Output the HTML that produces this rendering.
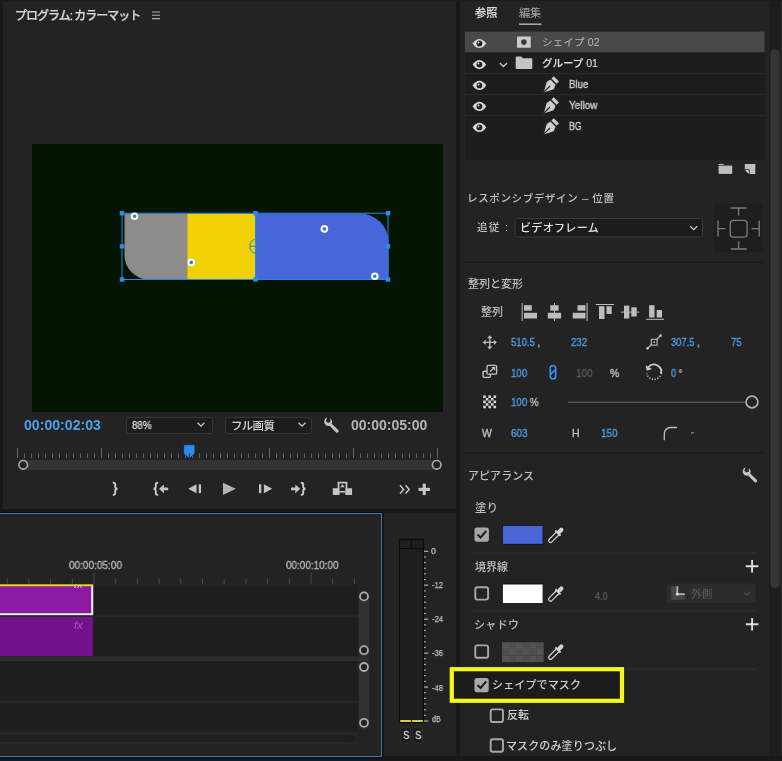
<!DOCTYPE html>
<html lang="ja">
<head>
<meta charset="utf-8">
<title>プログラム: カラーマット</title>
<style>
html,body{margin:0;padding:0;background:#181818;}
body{width:782px;height:761px;overflow:hidden;position:relative;font-family:"Liberation Sans","Noto Sans CJK JP",sans-serif;color:#bdbdbd;font-size:12px;-webkit-font-smoothing:antialiased;}
.abs{position:absolute;}
.panel{position:absolute;background:#232323;}
.t{will-change:transform;position:absolute;white-space:nowrap;line-height:1;}
.blue{color:#4a9ee6;}
.line{position:absolute;height:1px;background:#323232;}
svg{position:absolute;overflow:visible;}
.cb{position:absolute;width:11px;height:11px;border:1.5px solid #a8a8a8;border-radius:2px;}
.cbc{position:absolute;width:14px;height:14px;background:#b0b0b0;border-radius:2px;}
.mt{font-size:8.5px;color:#b8b8b8;}
.ly{font-size:11.500px;color:#c8c8c8;}
.v{font-size:10.500px;}
.g{color:#c0c0c0;}
</style>
</head>
<body>
<!-- ===== Program monitor panel ===== -->
<div class="panel" id="pm" style="left:2.5px;top:0;width:453.7px;height:508.8px;"></div>
<svg style="left:151.5px;top:11px;" width="9" height="9"><path d="M0 1h8M0 4.300h8M0 7.600h8" stroke="#b0b0b0" stroke-width="1.100"/></svg>
<!-- video -->
<div class="abs" style="left:32px;top:144px;width:411px;height:268px;background:#051503;"></div>
<svg style="left:0;top:0;" width="460" height="420" id="shapes">
  <path d="M124.500 213.500H190V279.500H149A24.500 24.500 0 0 1 124.500 255Z" fill="#8c8c8c"/>
  <rect x="187.5" y="213.5" width="68" height="66" fill="#f0d106"/>
  <path d="M255.5 213.5H360A28.5 28.5 0 0 1 388.5 242V279.5H255.5Z" fill="#4766da"/>
  <rect x="122" y="213.2" width="266" height="66.3" fill="none" stroke="#2a86e0" stroke-width="1"/>
  <line x1="255.5" y1="213" x2="255.5" y2="280" stroke="#2a86e0" stroke-width="1"/>
  <g fill="#2a8cee">
    <rect x="119.8" y="211" width="4.4" height="4.4"/><rect x="253.3" y="211" width="4.4" height="4.4"/><rect x="385.8" y="211" width="4.4" height="4.4"/>
    <rect x="119.8" y="244.1" width="4.4" height="4.4"/><rect x="385.8" y="244.1" width="4.4" height="4.4"/>
    <rect x="119.8" y="277.3" width="4.4" height="4.4"/><rect x="253.3" y="277.3" width="4.4" height="4.4"/><rect x="385.8" y="277.3" width="4.4" height="4.4"/>
  </g>
  <g fill="#2a7fd8" stroke="#fff" stroke-width="2">
    <circle cx="134.5" cy="216.3" r="2.800"/><circle cx="191.3" cy="262.4" r="2.800"/><circle cx="324.4" cy="228.9" r="2.800"/><circle cx="374.8" cy="276.2" r="2.800"/>
  </g>
  <g fill="none" stroke="#2a7fd8" stroke-width="1"><circle cx="257.3" cy="246.3" r="7.5"/><path d="M250 246.3h15M257.3 239v15"/></g>
</svg>
<!-- timecode row -->
<div class="abs" style="left:126px;top:417px;width:85px;height:15px;border:1px solid #373737;border-radius:2.5px;background:#1d1d1d;"></div>
<svg style="left:197px;top:422px;" width="8" height="6"><path d="M0.5 0.8L4 4.2L7.5 0.8" fill="none" stroke="#cfcfcf" stroke-width="1.2"/></svg>
<div class="abs" style="left:225px;top:417px;width:85px;height:15px;border:1px solid #373737;border-radius:2.5px;background:#1d1d1d;"></div>
<svg style="left:298px;top:422px;" width="8" height="6"><path d="M0.5 0.8L4 4.2L7.5 0.8" fill="none" stroke="#cfcfcf" stroke-width="1.2"/></svg>

<!-- ruler -->
<svg style="left:0;top:0;" width="460" height="510">
  <path d="M17.5 448V458M24.5 453.5V458M31.5 453.5V458M38.5 453.5V458M45.5 453.5V458M52.5 453.5V458M59.5 453.5V458M66.5 453.5V458M73.5 453.5V458M80.5 453.5V458M87.5 453.5V458M94.5 453.5V458M101.5 448V458M108.5 453.5V458M115.5 453.5V458M122.5 453.5V458M129.5 453.5V458M136.5 453.5V458M143.5 453.5V458M150.5 453.5V458M157.5 453.5V458M164.5 453.5V458M171.5 453.5V458M178.5 453.5V458M185.5 448V458M192.5 453.5V458M199.5 453.5V458M206.5 453.5V458M213.5 453.5V458M220.5 453.5V458M227.5 453.5V458M234.5 453.5V458M241.5 453.5V458M248.5 453.5V458M255.5 453.5V458M262.5 453.5V458M269.5 448V458M276.5 453.5V458M283.5 453.5V458M290.5 453.5V458M297.5 453.5V458M304.5 453.5V458M311.5 453.5V458M318.5 453.5V458M325.5 453.5V458M332.5 453.5V458M339.5 453.5V458M346.5 453.5V458M353.5 448V458M360.5 453.5V458M367.5 453.5V458M374.5 453.5V458M381.5 453.5V458M388.5 453.5V458M395.5 453.5V458M402.5 453.5V458M409.5 453.5V458M416.5 453.5V458M423.5 453.5V458M430.5 453.5V458M437.5 448V458" stroke="#646464" stroke-width="1" fill="none"/>
  <rect x="18" y="460" width="424" height="10" rx="5" fill="#333333"/>
  <circle cx="23.2" cy="464.8" r="4.3" fill="#232323" stroke="#a8a8a8" stroke-width="1.6"/>
  <circle cx="436.7" cy="464.8" r="4.3" fill="#232323" stroke="#a8a8a8" stroke-width="1.6"/>
  <path d="M183.700 444.800h11.200v8.600l-5.600 5.200l-5.600-5.200z" fill="#2d8ceb" stroke="#0c1c30" stroke-width=".6"/><path d="M189.300 453.500v4.500" stroke="#0a2a5a" stroke-width="1"/>
  <!-- transport -->
  <g fill="none" stroke="#cbcbcb" stroke-width="1.900">
    <path d="M112.800 482.700h.6q1.800 0 1.800 1.800v2.200q0 1.700 2.100 2.100q-2.100 .4-2.100 2.100v2.200q0 1.800-1.800 1.800h-.6"/>
    <path d="M158.200 482.700h-.6q-1.800 0-1.800 1.800v2.200q0 1.700-2.100 2.100q2.100 .4 2.100 2.100v2.200q0 1.800 1.800 1.800h.6"/>
    <path d="M300.800 482.700h.6q1.800 0 1.800 1.800v2.200q0 1.700 2.100 2.100q-2.100 .4-2.100 2.100v2.200q0 1.800-1.800 1.800h-.6"/>
  </g>
  <g fill="#c4c4c4">
    <path d="M159 488.800l4.900-4.400v3h4.300v2.800h-4.300v3z"/>
    <path d="M300.200 488.800l-4.900-4.400v3h-4.300v2.800h4.300v3z"/>
    <path d="M188.200 488.700l8.300-4.500v9z"/><rect x="198.700" y="484.300" width="2.300" height="8.800"/>
    <path d="M223 482.700l12.800 6.100l-12.800 6.100z" fill="#b4b4b4"/>
    <rect x="259" y="484.300" width="2.300" height="8.800"/><path d="M272.200 488.700l-8.300-4.500v9z"/>
    <path d="M332.800 488.300h6.800v6.600h-6.800zM345.300 488.300h6.800v6.600h-6.800zM337.600 481.700h9.800v8h-1.800v-6.200h-6.200v6.200h-1.800z"/>
    <path d="M342.500 484.300l2.400 3h-4.800z"/>
    <rect x="339.600" y="491" width="5.700" height="1.600"/>
    <rect x="418.500" y="487.800" width="11.500" height="3.200"/><rect x="422.650" y="483.600" width="3.200" height="11.500"/>
  </g>
  <path d="M400 485.200l3.700 4.200l-3.700 4.200M405.500 485.200l3.700 4.200l-3.700 4.200" fill="none" stroke="#c4c4c4" stroke-width="1.5"/>
  <!-- wrench -->
  <g transform="translate(324,417)"><path d="M3.200 .6a4.300 4.300 0 0 0-1.300 7.600a4.300 4.300 0 0 0 3.700 .5l6.300 6.500a1.500 1.500 0 0 0 2.300-2.100l-6.500-6.400a4.300 4.300 0 0 0-1.500-5.200l.3 3.200l-2.500 1.200l-2.200-1.900z" fill="#c4c4c4"/></g>
</svg>

<!-- ===== Timeline panel ===== -->
<div class="abs" style="left:-2px;top:513px;width:382px;height:242px;border:1px solid #3f78c0;background:#232323;box-shadow:0 0 0 1px #0c0c0c;"></div>
<div class="abs" style="left:0;top:585px;width:358px;height:148px;background:#1f1f1f;"></div>
<svg style="left:0;top:0;" width="460" height="761">
  <path d="M7.20 579V584M28.90 579V584M50.60 579V584M72.30 579V584M94.00 573V584M115.70 579V584M137.40 579V584M159.10 579V584M180.80 579V584M202.50 579V584M224.20 579V584M245.90 579V584M267.60 579V584M289.30 579V584M311.00 573V584M332.70 579V584M354.40 579V584" stroke="#4c4c4c" stroke-width="1" fill="none"/>
  <!-- clips -->
  <rect x="0" y="585" width="93.200" height="30.300" fill="#8c1aa0"/>
  <path d="M0 614.200H92.200V586" fill="none" stroke="#efefef" stroke-width="2"/>
  <rect x="0" y="584.300" width="93.200" height="1.900" fill="#ecdc10"/>
  <rect x="0" y="616.700" width="92.900" height="39.500" fill="#73128a"/>
  <rect x="0" y="615.500" width="358" height="1.200" fill="#2c2c2c"/>
  <rect x="0" y="656.500" width="369" height="4.500" fill="#2e2e2e"/>
  <rect x="0" y="701.200" width="358" height="1.200" fill="#2c2c2c"/>
  <rect x="0" y="732.500" width="358" height="1.200" fill="#2c2c2c"/>
  <rect x="0" y="742.500" width="358" height="1" fill="#2c2c2c"/>
  <rect x="-10" y="734" width="366" height="8.500" rx="4.200" fill="#1f1f1f" stroke="#2a2a2a" stroke-width="1"/>
  <!-- vertical scrollbars -->
  <rect x="358.700" y="591" width="10.500" height="66" rx="5" fill="#303030"/>
  <rect x="358.700" y="661" width="10.500" height="68" rx="5" fill="#303030"/>
  <g fill="#232323" stroke="#acacac" stroke-width="1.800">
    <circle cx="364" cy="596.400" r="4"/><circle cx="364" cy="650.200" r="4"/><circle cx="364" cy="667" r="4"/><circle cx="364" cy="722.800" r="4"/>
  </g>
</svg>
<div class="fx" style="will-change:transform;position:absolute;left:73.900px;top:619.5px;font-size:11.5px;line-height:1;font-style:italic;color:#a558bd;letter-spacing:-.3px;">fx</div>
<div class="fx" style="will-change:transform;position:absolute;left:73.900px;top:579px;font-size:11.5px;line-height:1;font-style:italic;color:#dcc0e4;letter-spacing:-.3px;clip-path:inset(6.5px 0 0 0);">fx</div>
<!-- ===== Audio meter panel ===== -->
<div class="panel" style="left:384px;top:513px;width:72px;height:243px;"></div>
<svg style="left:0;top:0;" width="460" height="761">
  <rect x="399.500" y="539.500" width="24" height="183" fill="#1e1e1e" stroke="#0a0a0a" stroke-width="1.200"/>
  <path d="M399.500 548.500h24M411.500 539.500v9" stroke="#0a0a0a" stroke-width="1.200"/>
  <rect x="400.200" y="720" width="10.700" height="2" fill="#d6cc3e"/><rect x="412.100" y="720" width="10.700" height="2" fill="#d6cc3e"/>
  <g fill="#b0b0b0"><rect x="424" y="550.7" width="4.200" height="1.200"/><rect x="424" y="556.4" width="1.800" height="1.200"/><rect x="424" y="562.0" width="1.800" height="1.200"/><rect x="424" y="567.7" width="1.800" height="1.200"/><rect x="424" y="573.3" width="1.800" height="1.200"/><rect x="424" y="579.0" width="1.800" height="1.200"/><rect x="424" y="584.6" width="4.200" height="1.200"/><rect x="424" y="590.3" width="1.800" height="1.200"/><rect x="424" y="596.0" width="1.800" height="1.200"/><rect x="424" y="601.6" width="1.800" height="1.200"/><rect x="424" y="607.3" width="1.800" height="1.200"/><rect x="424" y="612.9" width="1.800" height="1.200"/><rect x="424" y="618.6" width="4.200" height="1.200"/><rect x="424" y="624.2" width="1.800" height="1.200"/><rect x="424" y="629.9" width="1.800" height="1.200"/><rect x="424" y="635.5" width="1.800" height="1.200"/><rect x="424" y="641.2" width="1.800" height="1.200"/><rect x="424" y="646.9" width="1.800" height="1.200"/><rect x="424" y="652.5" width="4.200" height="1.200"/><rect x="424" y="658.2" width="1.800" height="1.200"/><rect x="424" y="663.8" width="1.800" height="1.200"/><rect x="424" y="669.5" width="1.800" height="1.200"/><rect x="424" y="675.1" width="1.800" height="1.200"/><rect x="424" y="680.8" width="1.800" height="1.200"/><rect x="424" y="686.5" width="4.200" height="1.200"/><rect x="424" y="692.1" width="1.800" height="1.200"/><rect x="424" y="697.8" width="1.800" height="1.200"/><rect x="424" y="703.4" width="1.800" height="1.200"/><rect x="424" y="709.1" width="1.800" height="1.200"/><rect x="424" y="714.7" width="1.800" height="1.200"/><rect x="424" y="720.4" width="4.200" height="1.200"/></g>
  <rect x="400.700" y="727.400" width="9.600" height="15.600" rx="1" fill="#1c1c1c" stroke="#303030" stroke-width=".8"/>
  <rect x="412.700" y="727.400" width="9.800" height="15.600" rx="1" fill="#1c1c1c" stroke="#303030" stroke-width=".8"/>
</svg>

<!-- ===== Essential Graphics panel ===== -->
<div class="panel" style="left:460px;top:0;width:322px;height:755.5px;"></div>
<svg style="left:0;top:0;" width="782" height="761"><rect x="465" y="31.500" width="299.500" height="128.500" fill="#1d1d1d"/>
<rect x="465" y="31.500" width="299.500" height="20.700" fill="#484848"/>
<rect x="465" y="73.0" width="299.500" height="1" fill="#2a2a2a"/>
<rect x="465" y="94.0" width="299.500" height="1" fill="#2a2a2a"/>
<rect x="465" y="115.0" width="299.500" height="1" fill="#2a2a2a"/>
<g transform="translate(479.4,43.5)"><path d="M-6.800 0Q-3.500-4.600 0-4.600Q3.500-4.600 6.800 0Q3.500 4.600 0 4.600Q-3.500 4.600-6.800 0Z" fill="#d8d8d8"/>
<circle cx="0" cy="0" r="2.900" fill="#222"/>
<circle cx="-.9" cy="-1" r="1" fill="#d8d8d8"/>
</g>
<g transform="translate(479.4,64.6)"><path d="M-6.800 0Q-3.500-4.600 0-4.600Q3.500-4.600 6.800 0Q3.500 4.600 0 4.600Q-3.500 4.600-6.800 0Z" fill="#d8d8d8"/>
<circle cx="0" cy="0" r="2.900" fill="#222"/>
<circle cx="-.9" cy="-1" r="1" fill="#d8d8d8"/>
</g>
<g transform="translate(479.4,85.4)"><path d="M-6.800 0Q-3.500-4.600 0-4.600Q3.500-4.600 6.800 0Q3.500 4.600 0 4.600Q-3.500 4.600-6.800 0Z" fill="#d8d8d8"/>
<circle cx="0" cy="0" r="2.900" fill="#222"/>
<circle cx="-.9" cy="-1" r="1" fill="#d8d8d8"/>
</g>
<g transform="translate(479.4,106.4)"><path d="M-6.800 0Q-3.500-4.600 0-4.600Q3.500-4.600 6.800 0Q3.500 4.600 0 4.600Q-3.500 4.600-6.800 0Z" fill="#d8d8d8"/>
<circle cx="0" cy="0" r="2.900" fill="#222"/>
<circle cx="-.9" cy="-1" r="1" fill="#d8d8d8"/>
</g>
<g transform="translate(479.4,127.4)"><path d="M-6.800 0Q-3.500-4.600 0-4.600Q3.500-4.600 6.800 0Q3.500 4.600 0 4.600Q-3.500 4.600-6.800 0Z" fill="#d8d8d8"/>
<circle cx="0" cy="0" r="2.900" fill="#222"/>
<circle cx="-.9" cy="-1" r="1" fill="#d8d8d8"/>
</g>
<rect x="517" y="36.400" width="13.800" height="11.300" rx=".8" fill="#cacaca"/>
<circle cx="523.900" cy="42.100" r="2.800" fill="#3a3a3a"/>
<path d="M499.800 63l3.600 3.500l3.600-3.500" fill="none" stroke="#c8c8c8" stroke-width="1.300"/>
<path d="M515.700 57.200q0-.8 .8-.8h4.700l1.600 1.900h8.700q.8 0 .8 .8v9.200q0 .8-.8 .8h-15q-.8 0-.8-.8z" fill="#c4c4c4"/>
<g transform="translate(543.2,76)" fill="#cdcdcd"><path d="M10.600 .2l5.200 5.200l-2.400 2.400l-5.200-5.200z"/><path d="M7.200 3.600l5.200 5.200l-1.900 4.400l-10 3.200l3-10.400z"/><path d="M.6 16.200l6.200-6.200" stroke="#1d1d1d" stroke-width="1.100" fill="none"/></g>
<g transform="translate(543.2,97)" fill="#cdcdcd"><path d="M10.600 .2l5.200 5.200l-2.400 2.400l-5.200-5.200z"/><path d="M7.200 3.600l5.200 5.200l-1.900 4.400l-10 3.200l3-10.400z"/><path d="M.6 16.200l6.200-6.200" stroke="#1d1d1d" stroke-width="1.100" fill="none"/></g>
<g transform="translate(543.2,118)" fill="#cdcdcd"><path d="M10.600 .2l5.200 5.200l-2.400 2.400l-5.200-5.200z"/><path d="M7.200 3.600l5.200 5.200l-1.900 4.400l-10 3.200l3-10.400z"/><path d="M.6 16.200l6.200-6.200" stroke="#1d1d1d" stroke-width="1.100" fill="none"/></g>
<path d="M718.600 163.900h5.200v1h-5.200z" fill="#c6c6c6"/><path d="M718.600 165.600h13.600v8.300h-13.600z" fill="#bebebe"/>
<path d="M744.800 164h10.500v10h-6.200l-4.300-4.300z" fill="#c0c0c0"/>
<path d="M744.800 169.700h4.300v4.300z" fill="#dcdcdc"/><path d="M744.400 169.600h4.800v4.600" fill="none" stroke="#232323" stroke-width=".9"/>
<rect x="769" y="0" width="11.700" height="755.500" fill="#1d1d1d"/><rect x="780.700" y="0" width="1.300" height="755.500" fill="#2c2c2c"/>
<rect x="770.200" y="49.200" width="9.700" height="539" rx="4.850" fill="#343434"/>
<rect x="519" y="23.400" width="22.500" height="1.600" fill="#a4a4a4"/>
</svg>

<svg style="left:0;top:0;" width="782" height="761"><rect x="464.500" y="261.800" width="299.500" height="1.200" fill="#1a1a1a"/>
<rect x="464.500" y="452.100" width="299.500" height="1.200" fill="#1a1a1a"/>
<rect x="472.500" y="552.600" width="283.500" height="1" fill="#323232"/>
<rect x="472.500" y="610.300" width="283.500" height="1" fill="#323232"/>
<rect x="472.500" y="668.700" width="283.500" height="1" fill="#323232"/>
<rect x="515" y="218.500" width="187.500" height="18.500" rx="2" fill="#1b1b1b" stroke="#3a3a3a" stroke-width="1"/>
<path d="M690.200 226.200l3.500 3.400l3.500-3.400" fill="none" stroke="#d0d0d0" stroke-width="1.300"/>
<rect x="714" y="203.800" width="49" height="48.200" rx="1.500" fill="#1e1e1e"/>
<g fill="none" stroke="#7c7c7c" stroke-width="1.300"><rect x="730.300" y="220.300" width="16.800" height="16.800" rx="3.200"/>
<path d="M730.600 208h16M738.600 208v7.600M730.600 249h16M738.600 249v-7.600M718 220.600v16M718 228.600h7.400M759.200 220.600v16M759.200 228.600h-7.600"/>
</g>
<g fill="#bdbdbd"><rect x="521.700" y="303" width="1" height="18"/>
<rect x="524" y="305.200" width="7.800" height="5.500"/>
<rect x="524" y="312.800" width="13" height="5.700"/>
<rect x="554" y="303" width="1" height="18"/>
<rect x="550.300" y="305.200" width="8.300" height="5.500"/>
<rect x="547.800" y="312.800" width="13.300" height="5.700"/>
<rect x="586.600" y="303" width="1" height="18"/>
<rect x="577.500" y="305.200" width="8" height="5.500"/>
<rect x="572.700" y="312.800" width="12.800" height="5.700"/>
<rect x="595.800" y="304" width="18.400" height="1"/>
<rect x="599" y="306.200" width="5.500" height="12.800"/>
<rect x="606.500" y="306.200" width="5.200" height="7.800"/>
<rect x="620.800" y="311.600" width="18.400" height="1"/>
<rect x="624" y="305.600" width="5.300" height="13"/>
<rect x="631.300" y="307.300" width="5.400" height="9.200"/>
<rect x="646" y="318.800" width="18" height="1"/>
<rect x="649.100" y="305.200" width="5.400" height="12.300"/>
<rect x="656.700" y="310" width="5.300" height="7.500"/>
</g>
<g transform="translate(489.800,342.300)" fill="#bdbdbd"><rect x="-5" y="-.6" width="10" height="1.300"/>
<rect x="-.65" y="-5" width="1.300" height="10"/>
<path d="M-7.100 0l3-2.600v5.200zM7.100 0l-3-2.600v5.200zM0-7.100l-2.600 3h5.200zM0 7.100l-2.600-3h5.200z"/>
</g>
<g fill="none" stroke="#c4c4c4" stroke-width="1.300"><rect x="483.100" y="371.400" width="7.300" height="6" rx="1.200"/><rect x="487" y="365.400" width="9.600" height="8.700" rx="1.200" fill="#232323"/><path d="M483.100 373.500v-1q0-1.100 1.100-1.100h3"/><path d="M490 371.600l3.600-3.400"/></g><path d="M491.300 366.900h3.900v3.900z" fill="#c4c4c4"/>
<g fill="none" stroke="#3f92e8" stroke-width="1.700" stroke-linecap="round"><rect x="550.300" y="365.500" width="5.300" height="13.500" rx="2.650" fill="#0a1830"/><path d="M550.800 374.200L555.100 370.200"/></g>
<g fill="#d6d6d6"><rect x="483.20" y="395.40" width="2.58" height="2.58"/>
<rect x="488.36" y="395.40" width="2.58" height="2.58"/>
<rect x="493.52" y="395.40" width="2.58" height="2.58"/>
<rect x="485.78" y="397.98" width="2.58" height="2.58"/>
<rect x="490.94" y="397.98" width="2.58" height="2.58"/>
<rect x="483.20" y="400.56" width="2.58" height="2.58"/>
<rect x="488.36" y="400.56" width="2.58" height="2.58"/>
<rect x="493.52" y="400.56" width="2.58" height="2.58"/>
<rect x="485.78" y="403.14" width="2.58" height="2.58"/>
<rect x="490.94" y="403.14" width="2.58" height="2.58"/>
<rect x="483.20" y="405.72" width="2.58" height="2.58"/>
<rect x="488.36" y="405.72" width="2.58" height="2.58"/>
<rect x="493.52" y="405.72" width="2.58" height="2.58"/>
</g>
<rect x="568" y="401.500" width="178" height="1.400" fill="#555"/>
<circle cx="752" cy="402" r="5.900" fill="#232323" stroke="#b4b4b4" stroke-width="1.600"/>
<g><path d="M647.600 348.200L660.500 335.800" stroke="#bdbdbd" stroke-width="1.200"/>
<rect x="651.300" y="339.300" width="5.800" height="5.800" fill="#232323" stroke="#bdbdbd" stroke-width="1.100"/>
<rect x="653.400" y="341.400" width="1.600" height="1.600" fill="#bdbdbd"/>
<circle cx="647.500" cy="348.300" r="1.400" fill="#bdbdbd"/>
<circle cx="660.600" cy="335.700" r="1.400" fill="#bdbdbd"/>
</g>
<g fill="none" stroke="#cdcdcd"><path d="M648.4 367.0A7.4 7.4 0 0 1 661.0 374.0" stroke-width="1.800"/>
<path d="M660.2 375.9A7.4 7.4 0 0 1 646.7 373.5" stroke-width="1.400" stroke-dasharray="1.200 1.550"/>
</g>
<path d="M645.600 365.200l6.400 3.700l-5.200 1.900z" fill="#cdcdcd"/>
<path d="M664.300 440.300v-6.800a6 6 0 0 1 6-6h6.700" fill="none" stroke="#bdbdbd" stroke-width="1.300"/>
<rect x="691" y="432.300" width="3" height="1.200" fill="#4a9ee6"/>
<g transform="translate(742.5,466.7)"><path d="M3.200 .6a4.300 4.300 0 0 0-1.300 7.600a4.300 4.300 0 0 0 3.700 .5l6.300 6.500a1.500 1.500 0 0 0 2.300-2.100l-6.500-6.400a4.300 4.300 0 0 0-1.500-5.200l.3 3.200l-2.500 1.200l-2.200-1.900z" fill="#c4c4c4"/>
</g>
<rect x="474.500" y="527.400" width="14.400" height="14.400" rx="2.200" fill="#a8a8a8"/>
<path d="M477.500 534.500l3 3l5.700-6.500" fill="none" stroke="#1a1a1a" stroke-width="1.900"/>
<rect x="502.300" y="525.300" width="40.800" height="19" fill="#4a66d6" stroke="#151515" stroke-width="1"/>
<g transform="translate(549.2,541.9) rotate(45)"><path d="M-1.900 -11.600V-1.900a1.900 1.900 0 0 0 3.800 0V-11.600" fill="none" stroke="#d2d2d2" stroke-width="1.250"/><rect x="-3.700" y="-13.400" width="7.400" height="2" rx=".4" fill="#d2d2d2"/><rect x="-2.100" y="-19.300" width="4.200" height="7" rx="2.100" fill="#d2d2d2"/></g>
<rect x="475.300" y="587.300" width="12.800" height="12.300" rx="2" fill="none" stroke="#a8a8a8" stroke-width="1.900"/>
<rect x="502.300" y="584" width="40.800" height="19.600" fill="#ffffff" stroke="#151515" stroke-width="1"/>
<g transform="translate(549.2,600.6) rotate(45)"><path d="M-1.900 -11.600V-1.900a1.900 1.900 0 0 0 3.800 0V-11.600" fill="none" stroke="#d2d2d2" stroke-width="1.250"/><rect x="-3.700" y="-13.400" width="7.400" height="2" rx=".4" fill="#d2d2d2"/><rect x="-2.100" y="-19.300" width="4.200" height="7" rx="2.100" fill="#d2d2d2"/></g>
<path d="M745.800 566.300h12.600M752.100 560v12.600" stroke="#dedede" stroke-width="1.900"/>
<path d="M745.800 624.300h12.600M752.100 618v12.600" stroke="#dedede" stroke-width="1.900"/>
<rect x="666.300" y="583.600" width="89.400" height="19.400" rx="2" fill="#2c2c2c"/>
<rect x="671.200" y="586.200" width="13.600" height="13.600" fill="#474747"/>
<rect x="676.800" y="586.200" width="8" height="8.200" fill="#2c2c2c"/>
<path d="M677.300 586.200v7.900h7.500" fill="none" stroke="#b4b4b4" stroke-width="1.800"/>
<circle cx="677.300" cy="594.100" r="1.600" fill="#d8d8d8"/>
<path d="M743.300 591.500l3.500 3.400l3.500-3.400" fill="none" stroke="#484848" stroke-width="1.200"/>
<rect x="475.300" y="645.400" width="12.800" height="12.300" rx="2" fill="none" stroke="#a8a8a8" stroke-width="1.900"/>
<rect x="502.00" y="642.20" width="7.03" height="6.70" fill="#545454"/>
<rect x="508.93" y="642.20" width="7.03" height="6.70" fill="#4e4e4e"/>
<rect x="515.87" y="642.20" width="7.03" height="6.70" fill="#545454"/>
<rect x="522.80" y="642.20" width="7.03" height="6.70" fill="#4e4e4e"/>
<rect x="529.73" y="642.20" width="7.03" height="6.70" fill="#545454"/>
<rect x="536.67" y="642.20" width="7.03" height="6.70" fill="#4e4e4e"/>
<rect x="502.00" y="648.80" width="7.03" height="6.70" fill="#4e4e4e"/>
<rect x="508.93" y="648.80" width="7.03" height="6.70" fill="#545454"/>
<rect x="515.87" y="648.80" width="7.03" height="6.70" fill="#4e4e4e"/>
<rect x="522.80" y="648.80" width="7.03" height="6.70" fill="#545454"/>
<rect x="529.73" y="648.80" width="7.03" height="6.70" fill="#4e4e4e"/>
<rect x="536.67" y="648.80" width="7.03" height="6.70" fill="#545454"/>
<rect x="502.00" y="655.40" width="7.03" height="6.70" fill="#545454"/>
<rect x="508.93" y="655.40" width="7.03" height="6.70" fill="#4e4e4e"/>
<rect x="515.87" y="655.40" width="7.03" height="6.70" fill="#545454"/>
<rect x="522.80" y="655.40" width="7.03" height="6.70" fill="#4e4e4e"/>
<rect x="529.73" y="655.40" width="7.03" height="6.70" fill="#545454"/>
<rect x="536.67" y="655.40" width="7.03" height="6.70" fill="#4e4e4e"/>
<g transform="translate(549.2,658.7) rotate(45)"><path d="M-1.900 -11.600V-1.900a1.900 1.900 0 0 0 3.800 0V-11.600" fill="none" stroke="#d2d2d2" stroke-width="1.250"/><rect x="-3.700" y="-13.400" width="7.400" height="2" rx=".4" fill="#d2d2d2"/><rect x="-2.100" y="-19.300" width="4.200" height="7" rx="2.100" fill="#d2d2d2"/></g>
<rect x="454" y="671" width="166" height="28" fill="#1c1c1c"/>
<rect x="474.500" y="678" width="14.200" height="14.200" rx="2.200" fill="#a8a8a8"/>
<path d="M477.500 685l3 3l5.700-6.500" fill="none" stroke="#1a1a1a" stroke-width="1.900"/>
<rect x="490.700" y="709.400" width="12.300" height="12.600" rx="2" fill="none" stroke="#a8a8a8" stroke-width="1.900"/>
<rect x="490.700" y="739.200" width="12.300" height="12.600" rx="2" fill="none" stroke="#a8a8a8" stroke-width="1.900"/>
<rect x="451.800" y="669.200" width="170.200" height="31.600" fill="none" stroke="#f6f61c" stroke-width="4.200"/>
</svg>
<div class="abs" style="left:0;top:0;width:782px;height:1px;background:#1a1a1a;box-shadow:0 1px 0 #202020;"></div>
<div class="t" id="t0" style="left:15.00px;top:9.80px;font-size:12px;color:#d6d6d6;letter-spacing:-1.00px;font-weight:500;-webkit-text-stroke:.25px;">プログラム: カラーマット</div>
<div class="t" id="t1" style="left:24.00px;top:418.00px;font-size:14px;color:#4da2ea;transform:scaleX(1.008);transform-origin:0 50%;font-weight:bold;">00:00:02:03</div>
<div class="t" id="t2" style="left:132.00px;top:419.75px;font-size:10.5px;color:#d4d4d4;transform:scaleX(0.929);transform-origin:0 50%;-webkit-text-stroke:.3px;">88%</div>
<div class="t" id="t3" style="left:231.20px;top:420.75px;font-size:11.5px;color:#d4d4d4;letter-spacing:-0.70px;font-weight:500;">フル画質</div>
<div class="t" id="t4" style="left:350.60px;top:418.00px;font-size:14px;color:#b4b4b4;transform:scaleX(0.996);transform-origin:0 50%;font-weight:bold;">00:00:05:00</div>
<div class="t" id="t5" style="left:69.00px;top:560.25px;font-size:10.5px;color:#bcbcbc;transform:scaleX(0.954);transform-origin:0 50%;-webkit-text-stroke:.3px;">00:00:05:00</div>
<div class="t" id="t6" style="left:286.00px;top:560.25px;font-size:10.5px;color:#bcbcbc;transform:scaleX(0.946);transform-origin:0 50%;-webkit-text-stroke:.3px;">00:00:10:00</div>
<div class="t" id="t7" style="left:402.60px;top:730.25px;font-size:11.5px;color:#d2d2d2;transform:scaleX(0.828);transform-origin:0 50%;-webkit-text-stroke:.3px;">S</div>
<div class="t" id="t8" style="left:414.60px;top:730.25px;font-size:11.5px;color:#d2d2d2;transform:scaleX(0.828);transform-origin:0 50%;-webkit-text-stroke:.3px;">S</div>
<div class="t" id="t9" style="left:431.40px;top:546.80px;font-size:8.8px;color:#c0c0c0;-webkit-text-stroke:.25px;">0</div>
<div class="t" id="t10" style="left:432.20px;top:580.90px;font-size:8.8px;color:#c0c0c0;transform:scaleX(0.869);transform-origin:0 50%;-webkit-text-stroke:.25px;">-12</div>
<div class="t" id="t11" style="left:432.20px;top:614.90px;font-size:8.8px;color:#c0c0c0;transform:scaleX(0.869);transform-origin:0 50%;-webkit-text-stroke:.25px;">-24</div>
<div class="t" id="t12" style="left:432.20px;top:649.00px;font-size:8.8px;color:#c0c0c0;transform:scaleX(0.869);transform-origin:0 50%;-webkit-text-stroke:.25px;">-36</div>
<div class="t" id="t13" style="left:432.20px;top:683.50px;font-size:8.8px;color:#c0c0c0;transform:scaleX(0.869);transform-origin:0 50%;-webkit-text-stroke:.25px;">-48</div>
<div class="t" id="t14" style="left:432.00px;top:715.20px;font-size:8.8px;color:#c0c0c0;transform:scaleX(0.812);transform-origin:0 50%;-webkit-text-stroke:.25px;">dB</div>
<div class="t" id="t15" style="left:475.00px;top:7.85px;font-size:11.2px;color:#dadada;font-weight:500;-webkit-text-stroke:.2px;">参照</div>
<div class="t" id="t16" style="left:519.00px;top:7.85px;font-size:11.2px;color:#a6a6a6;letter-spacing:-0.10px;">編集</div>
<div class="t" id="t17" style="left:542.00px;top:36.75px;font-size:10.5px;color:#bcbcbc;letter-spacing:0.17px;">シェイプ 02</div>
<div class="t" id="t18" style="left:542.00px;top:57.75px;font-size:10.5px;color:#dedede;letter-spacing:-0.03px;font-weight:500;-webkit-text-stroke:.15px;">グループ 01</div>
<div class="t" id="t19" style="left:569.20px;top:78.80px;font-size:10.8px;color:#d2d2d2;transform:scaleX(0.896);transform-origin:0 50%;-webkit-text-stroke:.35px;">Blue</div>
<div class="t" id="t20" style="left:569.20px;top:100.30px;font-size:10.8px;color:#d2d2d2;transform:scaleX(0.920);transform-origin:0 50%;-webkit-text-stroke:.35px;">Yellow</div>
<div class="t" id="t21" style="left:569.20px;top:120.80px;font-size:10.8px;color:#d2d2d2;transform:scaleX(0.808);transform-origin:0 50%;-webkit-text-stroke:.35px;">BG</div>
<div class="t" id="t22" style="left:467.00px;top:192.75px;font-size:10.5px;color:#c0c0c0;letter-spacing:0.64px;font-weight:500;">レスポンシブデザイン <span style="display:inline-block;transform:scaleX(.62);margin:0 -2.2px">—</span> 位置</div>
<div class="t" id="t23" style="left:477.00px;top:222.35px;font-size:10.5px;color:#c0c0c0;letter-spacing:1.33px;font-weight:500;">追従 :</div>
<div class="t" id="t24" style="left:520.00px;top:222.60px;font-size:11px;color:#e2e2e2;letter-spacing:0.33px;font-weight:500;">ビデオフレーム</div>
<div class="t" id="t25" style="left:468.00px;top:278.80px;font-size:11px;color:#c0c0c0;font-weight:500;">整列と変形</div>
<div class="t" id="t26" style="left:481.00px;top:307.00px;font-size:11px;color:#c0c0c0;font-weight:500;">整列</div>
<div class="t" id="t27" style="left:511.00px;top:337.05px;font-size:10.5px;color:#4da2ea;transform:scaleX(0.906);transform-origin:0 50%;-webkit-text-stroke:.3px;">510.5 <span style="color:#c0c0c0">,</span></div>
<div class="t" id="t28" style="left:571.20px;top:337.05px;font-size:10.5px;color:#4da2ea;transform:scaleX(0.923);transform-origin:0 50%;-webkit-text-stroke:.3px;">232</div>
<div class="t" id="t29" style="left:670.80px;top:337.05px;font-size:10.5px;color:#4da2ea;transform:scaleX(0.888);transform-origin:0 50%;-webkit-text-stroke:.3px;">307.5 <span style="color:#c0c0c0">,</span></div>
<div class="t" id="t30" style="left:731.00px;top:337.05px;font-size:10.5px;color:#4da2ea;transform:scaleX(0.917);transform-origin:0 50%;-webkit-text-stroke:.3px;">75</div>
<div class="t" id="t31" style="left:511.00px;top:367.70px;font-size:10.5px;color:#4da2ea;transform:scaleX(0.923);transform-origin:0 50%;-webkit-text-stroke:.3px;">100</div>
<div class="t" id="t32" style="left:576.00px;top:367.70px;font-size:10.5px;color:#5c5c5c;transform:scaleX(0.944);transform-origin:0 50%;-webkit-text-stroke:.3px;">100</div>
<div class="t" id="t33" style="left:609.60px;top:367.70px;font-size:10.5px;color:#c0c0c0;-webkit-text-stroke:.3px;">%</div>
<div class="t" id="t34" style="left:670.80px;top:367.70px;font-size:10.5px;color:#4da2ea;transform:scaleX(0.869);transform-origin:0 50%;-webkit-text-stroke:.3px;">0 <span style="color:#c0c0c0">°</span></div>
<div class="t" id="t35" style="left:511.00px;top:397.05px;font-size:10.5px;color:#4da2ea;transform:scaleX(0.923);transform-origin:0 50%;-webkit-text-stroke:.3px;">100 <span style="color:#c0c0c0">%</span></div>
<div class="t" id="t36" style="left:482.00px;top:428.35px;font-size:10.5px;color:#c0c0c0;-webkit-text-stroke:.3px;">W</div>
<div class="t" id="t37" style="left:511.00px;top:428.35px;font-size:10.5px;color:#4da2ea;transform:scaleX(0.944);transform-origin:0 50%;-webkit-text-stroke:.3px;">603</div>
<div class="t" id="t38" style="left:572.20px;top:428.35px;font-size:10.5px;color:#c0c0c0;-webkit-text-stroke:.3px;">H</div>
<div class="t" id="t39" style="left:601.00px;top:428.35px;font-size:10.5px;color:#4da2ea;transform:scaleX(0.944);transform-origin:0 50%;-webkit-text-stroke:.3px;">150</div>
<div class="t" id="t40" style="left:467.60px;top:470.80px;font-size:11px;color:#c0c0c0;letter-spacing:0.06px;font-weight:500;">アピアランス</div>
<div class="t" id="t41" style="left:474.80px;top:502.55px;font-size:11.5px;color:#c0c0c0;font-weight:500;">塗り</div>
<div class="t" id="t42" style="left:474.60px;top:561.60px;font-size:11px;color:#c0c0c0;letter-spacing:0.05px;font-weight:500;">境界線</div>
<div class="t" id="t43" style="left:595.00px;top:590.75px;font-size:10.5px;color:#5c5c5c;transform:scaleX(0.867);transform-origin:0 50%;-webkit-text-stroke:.3px;">4.0</div>
<div class="t" id="t44" style="left:690.60px;top:589.00px;font-size:11px;color:#5e5e5e;letter-spacing:-0.70px;">外側</div>
<div class="t" id="t45" style="left:474.20px;top:620.20px;font-size:11px;color:#c0c0c0;letter-spacing:0.37px;font-weight:500;">シャドウ</div>
<div class="t" id="t46" style="left:491.60px;top:680.00px;font-size:11px;color:#d0d0d0;letter-spacing:0.14px;font-weight:500;">シェイプでマスク</div>
<div class="t" id="t47" style="left:507.00px;top:710.00px;font-size:11px;color:#d0d0d0;font-weight:500;">反転</div>
<div class="t" id="t48" style="left:506.00px;top:741.20px;font-size:11px;color:#d0d0d0;letter-spacing:0.11px;font-weight:500;">マスクのみ塗りつぶし</div>
</body>
</html>
